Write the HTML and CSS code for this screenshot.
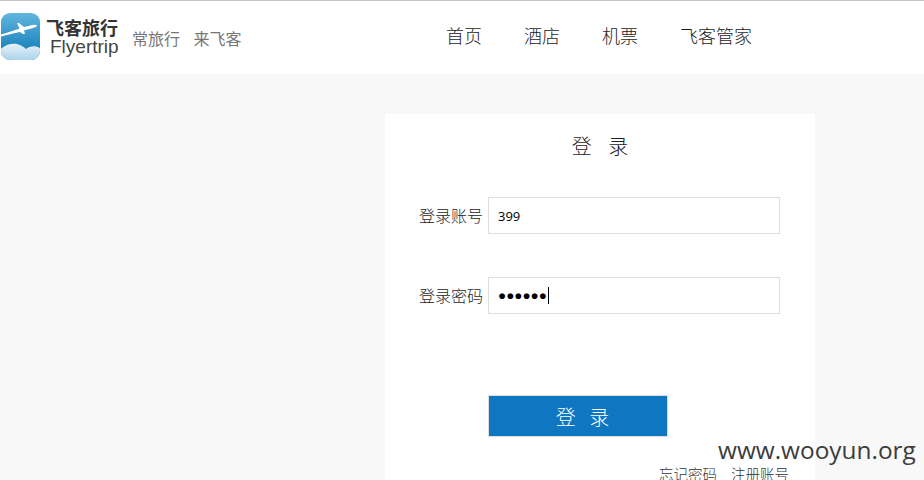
FILE: index.html
```html
<!DOCTYPE html>
<html lang="zh-CN">
<head>
    <meta charset="UTF-8">
    <meta name="viewport" content="width=device-width, initial-scale=1.0">
    <link rel="stylesheet" href="styles.css">
    <title>飞客旅行</title>
</head>
<body>

<div class="header">
    <div class="logo">
        <svg class="logo-icon" width="41" height="48" viewBox="0 0 41 48">
            <defs>
                <linearGradient id="cielo" x1="0" y1="0" x2="0" y2="1">
                    <stop offset="0" stop-color="#62b5de"/>
                    <stop offset="0.7" stop-color="#2088c0"/>
                </linearGradient>
                <linearGradient id="nube" x1="0" y1="0" x2="0" y2="1">
                    <stop offset="0" stop-color="#e6f1f8"/>
                    <stop offset="1" stop-color="#a9d2ea"/>
                </linearGradient>
                <clipPath id="marco"><rect x="1" width="39" height="47" rx="9"/></clipPath>
            </defs>
            <g clip-path="url(#marco)">
                <rect width="41" height="48" fill="url(#cielo)"/>
                <path d="M0 37C4 32 11 30 17 31C21 32 24 34 26 36C30 33 36 32 41 36V48H0Z" fill="url(#nube)"/>
                <path d="M37 12.500C36 11.500 33 11.500 30 12.500L24 14L19 10L17 10L19.500 15.500L14 17.500L1 21.500L1 23.500L15 20L20 19L23 21L25 21L24 17.500L33 15C35 14.500 37 13.500 37 12.500Z" fill="#fff"/>
            </g>
        </svg>
        <div class="logo-name">
            <span class="logo-cn">飞客旅行</span>
            <span class="logo-en">Flyertrip</span>
        </div>
        <span class="slogan">常旅行&nbsp;来飞客</span>
    </div>
    <ul class="nav">
        <li>首页</li>
        <li>酒店</li>
        <li>机票</li>
        <li>飞客管家</li>
    </ul>
</div>

<div class="main">
    <div class="card">
        <h2>登&nbsp;录</h2>
        <div class="row">
            <label>登录账号</label>
            <div class="input">399</div>
        </div>
        <div class="row row-pass">
            <label>登录密码</label>
            <div class="input input-pass">●●●●●●<span class="caret"></span></div>
        </div>
        <button class="btn">登&nbsp;录</button>
        <div class="links">
            <span>忘记密码</span>
            <span>注册账号</span>
        </div>
    </div>
</div>

<div class="watermark">www.wooyun.org</div>

</body>
</html>
```

FILE: styles.css
```css
html, body {
    height: 100%;
    overflow: hidden;
}

body {
    font-family: "Noto Sans CJK SC", "Liberation Sans", sans-serif;
    background-color: #f8f8f8;
    margin: 0;
    padding: 0;
    position: relative;
}

.header {
    background-color: #fff;
    border-top: 1px solid #c4c4c4;
    height: 73px;
    display: flex;
    align-items: center;
}

.logo {
    width: 446px;
    display: flex;
    align-items: center;
}

.logo-icon {
    margin-top: -1px;
}

.logo-name {
    display: flex;
    flex-direction: column;
    margin-top: 1px;
    margin-left: 5px;
    width: 86px;
    color: #333;
}

.logo-cn {
    font-size: 18px;
    font-weight: 700;
    line-height: 18px;
}

.logo-en {
    font-family: "Liberation Sans", sans-serif;
    font-size: 19px;
    line-height: 22px;
    color: #444;
    margin-left: 4px;
}

.slogan {
    font-size: 16px;
    color: #777;
    margin-top: 1px;
    word-spacing: 10px;
    white-space: nowrap;
}

.nav {
    list-style: none;
    margin: -5px 0 0 0;
    padding: 0;
    display: flex;
    gap: 42px;
    font-size: 18px;
    font-weight: 300;
    color: #1c1c1c;
}

.main {
    padding: 40px 0 0 385px;
}

.card {
    width: 430px;
    height: 366px;
    background-color: #fff;
    box-sizing: border-box;
    padding-top: 17px;
}

.card h2 {
    margin: 0;
    font-size: 20px;
    font-weight: 300;
    line-height: 30px;
    text-align: center;
    color: #1c1c1c;
    word-spacing: 12px;
}

.row {
    display: flex;
    align-items: center;
    margin-top: 36px;
    padding-left: 34px;
}

.row-pass {
    margin-top: 43px;
}

.row label {
    width: 64px;
    font-size: 16px;
    font-weight: 300;
    line-height: 22px;
    color: #1c1c1c;
    margin: -2px 5px 0 0;
    white-space: nowrap;
}

.input {
    width: 292px;
    height: 37px;
    box-sizing: border-box;
    border: 1px solid #ddd;
    padding-left: 9px;
    font-family: "Open Sans", sans-serif;
    font-size: 13px;
    line-height: 37px;
    color: #000;
    background-color: #fff;
}

.input-pass {
    display: flex;
    align-items: center;
    font-family: "Liberation Sans", sans-serif;
    font-size: 13.5px;
}

.caret {
    width: 1px;
    height: 17px;
    background-color: #000;
    margin-left: 1px;
}

.btn {
    display: block;
    width: 180px;
    height: 42px;
    margin: 81px 0 0 103px;
    border: 1px solid #ddd;
    background-color: #0f76c2;
    color: #fff;
    font-family: inherit;
    font-size: 20px;
    font-weight: 300;
    word-spacing: 9px;
    padding: 0 0 0 9px;
}

.links {
    display: flex;
    justify-content: flex-end;
    gap: 14px;
    margin-top: 27px;
    padding-right: 26px;
    font-size: 14.5px;
    font-weight: 300;
    line-height: 20px;
    color: #333;
}

.watermark {
    position: absolute;
    left: 718px;
    top: 434px;
    font-family: "Open Sans", sans-serif;
    font-size: 24.4px;
    line-height: 32px;
    color: #3c3c3c;
}
```
